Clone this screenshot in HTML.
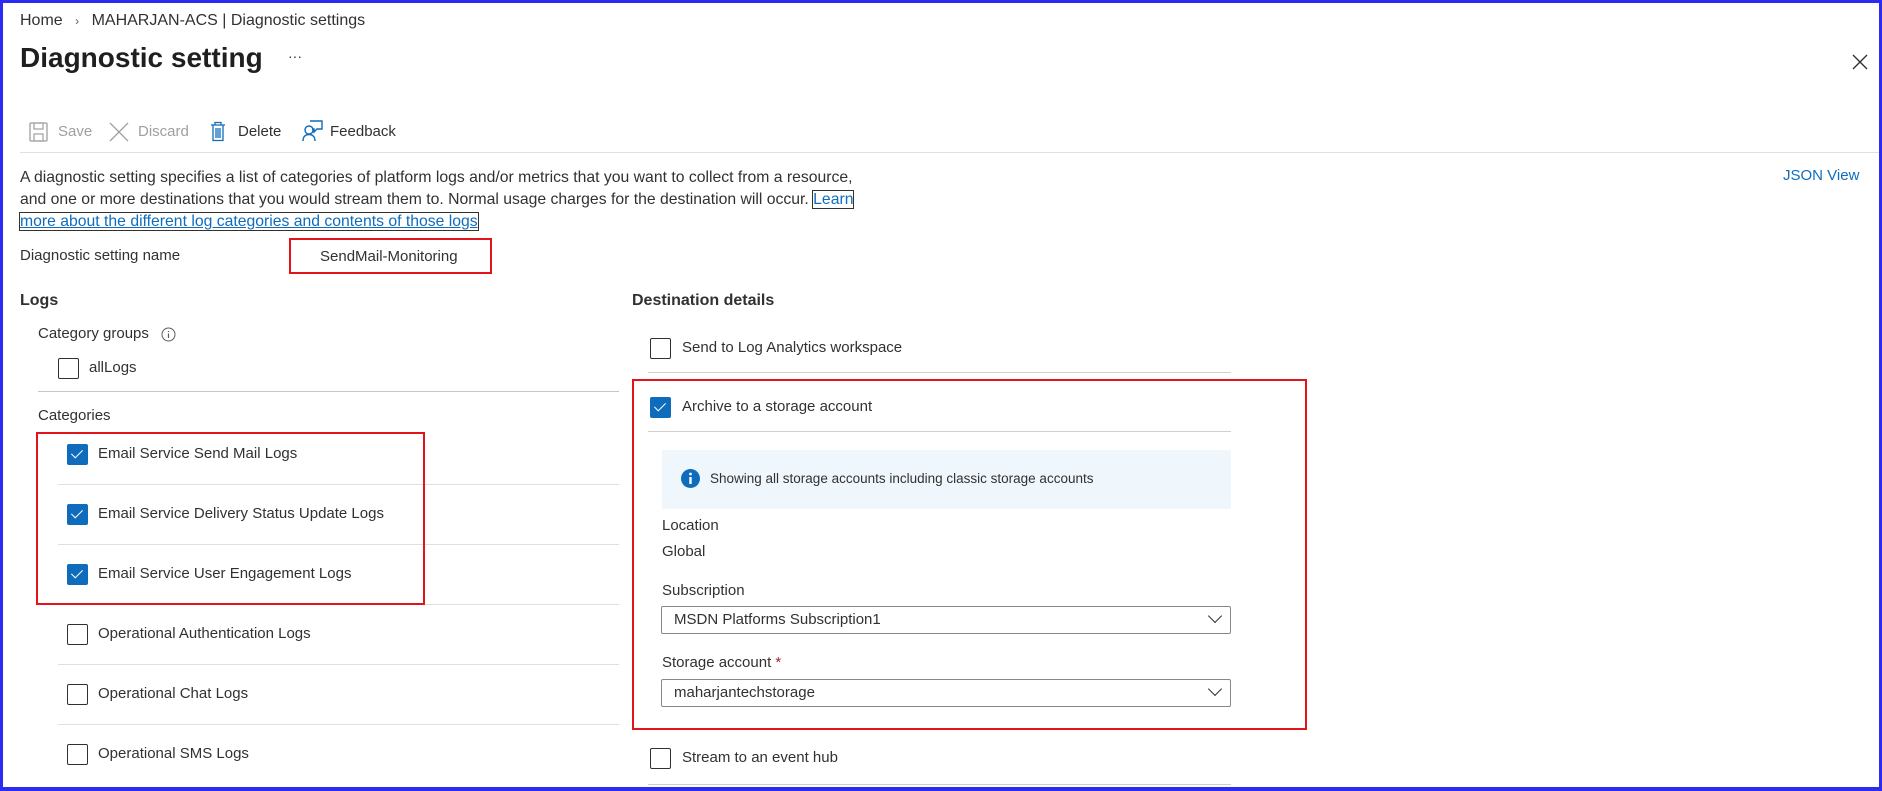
<!DOCTYPE html>
<html><head><meta charset="utf-8"><style>
*{margin:0;padding:0;box-sizing:border-box}
body{width:1882px;height:791px;overflow:hidden;background:#fff;font-family:"Liberation Sans",sans-serif;color:#323130;font-size:15px;position:relative}
.a{position:absolute;white-space:nowrap}
.frame{position:absolute;left:0;top:0;width:1882px;height:791px;border:3px solid #2b2bf2;border-bottom-width:4px;pointer-events:none}
.cb{position:absolute;width:21px;height:21px;border:1.5px solid #323130;border-radius:2px;background:#fff}
.cb.on{background:#0f6cbd;border-color:#0f6cbd}
.cb.on::after{content:"";position:absolute;left:6px;top:2px;width:5px;height:10px;border:solid #fff;border-width:0 1.5px 1.5px 0;transform:rotate(45deg)}
.hl{position:absolute;height:1px;background:#e1dfdd}
.red{position:absolute;border:2.5px solid #e3131b}
.dd{position:absolute;border:1px solid #8a8886;border-radius:2px;height:28px;padding-left:12px;line-height:26px}
.chev{position:absolute;right:10px;width:10px;height:10px;border:solid #323130;border-width:0 1.3px 1.3px 0;transform:rotate(45deg);top:4px}
.tb{color:#323130;font-size:15px}
.dis{color:#a19f9d}
</style></head><body>
<div class="a" style="left:20px;top:12px;font-size:16px">Home <span style="color:#605e5c;margin:0 8px;font-size:12px">›</span> MAHARJAN-ACS | Diagnostic settings</div>
<div class="a" style="left:20px;top:42px;font-size:28px;font-weight:bold;color:#201f1e">Diagnostic setting</div>
<div class="a" style="left:288px;top:48px;font-size:14px;color:#323130">···</div>
<svg class="a" style="left:1852px;top:54px" width="16" height="16"><path d="M1 1L15 15M15 1L1 15" stroke="#323130" stroke-width="1.4"/></svg>

<svg class="a" style="left:29px;top:122px" width="19" height="20"><rect x="1" y="1" width="17" height="18" rx="1" fill="none" stroke="#a19f9d" stroke-width="1.3"/><rect x="5" y="1" width="9" height="6" fill="none" stroke="#a19f9d" stroke-width="1.2"/><rect x="5" y="12" width="9" height="7" fill="none" stroke="#a19f9d" stroke-width="1.2"/></svg>
<div class="a dis" style="left:58px;top:123px">Save</div>
<svg class="a" style="left:109px;top:122px" width="20" height="20"><path d="M1 1L19 19M19 1L1 19" stroke="#a19f9d" stroke-width="1.3"/></svg>
<div class="a dis" style="left:138px;top:123px">Discard</div>
<svg class="a" style="left:210px;top:121px" width="16" height="21"><path d="M1 4H15M5 4V1.5H11V4M3 4V19.5H13V4M6 7V17M8 7V17M10 7V17" fill="none" stroke="#0f6cbd" stroke-width="1.3"/></svg>
<div class="a tb" style="left:238px;top:123px">Delete</div>
<svg class="a" style="left:301px;top:120px" width="22" height="22"><circle cx="8" cy="10" r="4" fill="none" stroke="#0f6cbd" stroke-width="1.4"/><path d="M2 21C2 16 5 14.5 8 14.5S14 16 14 21M9 1H21V9H16L13 12V9H11" fill="none" stroke="#0f6cbd" stroke-width="1.4"/></svg>
<div class="a tb" style="left:330px;top:123px">Feedback</div>
<div class="hl" style="left:20px;top:152px;width:1862px"></div>

<div class="a" style="left:20px;top:167px;line-height:22px;font-size:15.75px">A diagnostic setting specifies a list of categories of platform logs and/or metrics that you want to collect from a resource,<br>and one or more destinations that you would stream them to. Normal usage charges for the destination will occur. <span style="color:#0f6cbd;outline:1px solid #323130">Learn</span><br><span style="color:#0f6cbd;text-decoration:underline;outline:1px solid #323130">more about the different log categories and contents of those logs</span></div>
<div class="a" style="left:1783px;top:167px;color:#0f6cbd">JSON View</div>

<div class="a" style="left:20px;top:247px">Diagnostic setting name</div>
<div class="red" style="left:289px;top:238px;width:203px;height:36px"></div>
<div class="a" style="left:320px;top:248px">SendMail-Monitoring</div>

<div class="a" style="left:20px;top:292px;font-weight:bold;font-size:16px">Logs</div>
<div class="a" style="left:632px;top:292px;font-weight:bold;font-size:16px">Destination details</div>

<div class="a" style="left:38px;top:325px">Category groups</div>
<svg class="a" style="left:161px;top:327px" width="15" height="15"><circle cx="7.5" cy="7.5" r="6.5" fill="none" stroke="#605e5c"/><path d="M7.5 6.5V11M7.5 4V5" stroke="#605e5c" stroke-width="1.2"/></svg>
<div class="cb" style="left:58px;top:358px"></div>
<div class="a" style="left:89px;top:359px">allLogs</div>
<div class="hl" style="left:38px;top:391px;width:581px;background:#c8c6c4"></div>
<div class="a" style="left:38px;top:407px">Categories</div>

<div class="cb on" style="left:67px;top:444px"></div><div class="a" style="left:98px;top:445px">Email Service Send Mail Logs</div>
<div class="hl" style="left:58px;top:484px;width:561px"></div>
<div class="cb on" style="left:67px;top:504px"></div><div class="a" style="left:98px;top:505px">Email Service Delivery Status Update Logs</div>
<div class="hl" style="left:58px;top:544px;width:561px"></div>
<div class="cb on" style="left:67px;top:564px"></div><div class="a" style="left:98px;top:565px">Email Service User Engagement Logs</div>
<div class="hl" style="left:58px;top:604px;width:561px"></div>
<div class="cb" style="left:67px;top:624px"></div><div class="a" style="left:98px;top:625px">Operational Authentication Logs</div>
<div class="hl" style="left:58px;top:664px;width:561px"></div>
<div class="cb" style="left:67px;top:684px"></div><div class="a" style="left:98px;top:685px">Operational Chat Logs</div>
<div class="hl" style="left:58px;top:724px;width:561px"></div>
<div class="cb" style="left:67px;top:744px"></div><div class="a" style="left:98px;top:745px">Operational SMS Logs</div>
<div class="red" style="left:36px;top:432px;width:389px;height:173px"></div>

<div class="cb" style="left:650px;top:338px"></div><div class="a" style="left:682px;top:339px">Send to Log Analytics workspace</div>
<div class="hl" style="left:648px;top:372px;width:583px;background:#d2d0ce"></div>
<div class="cb on" style="left:650px;top:397px"></div><div class="a" style="left:682px;top:398px">Archive to a storage account</div>
<div class="hl" style="left:648px;top:431px;width:583px;background:#d2d0ce"></div>
<div class="a" style="left:662px;top:450px;width:569px;height:59px;background:#eff6fc;border-radius:2px"></div>
<svg class="a" style="left:681px;top:469px" width="19" height="19"><circle cx="9.5" cy="9.5" r="9.5" fill="#0f6cbd"/><rect x="8.3" y="8" width="2.4" height="7" fill="#fff"/><circle cx="9.5" cy="5" r="1.4" fill="#fff"/></svg>
<div class="a" style="left:710px;top:471px;font-size:13.5px">Showing all storage accounts including classic storage accounts</div>
<div class="a" style="left:662px;top:517px">Location</div>
<div class="a" style="left:662px;top:543px">Global</div>
<div class="a" style="left:662px;top:582px">Subscription</div>
<div class="dd" style="left:661px;top:606px;width:570px">MSDN Platforms Subscription1<span class="chev"></span></div>
<div class="a" style="left:662px;top:654px">Storage account <span style="color:#a4262c">*</span></div>
<div class="dd" style="left:661px;top:679px;width:570px">maharjantechstorage<span class="chev"></span></div>
<div class="red" style="left:632px;top:379px;width:675px;height:351px"></div>
<div class="cb" style="left:650px;top:748px"></div><div class="a" style="left:682px;top:749px">Stream to an event hub</div>
<div class="hl" style="left:648px;top:784px;width:583px;background:#d2d0ce"></div>
<div class="frame"></div>
</body></html>
